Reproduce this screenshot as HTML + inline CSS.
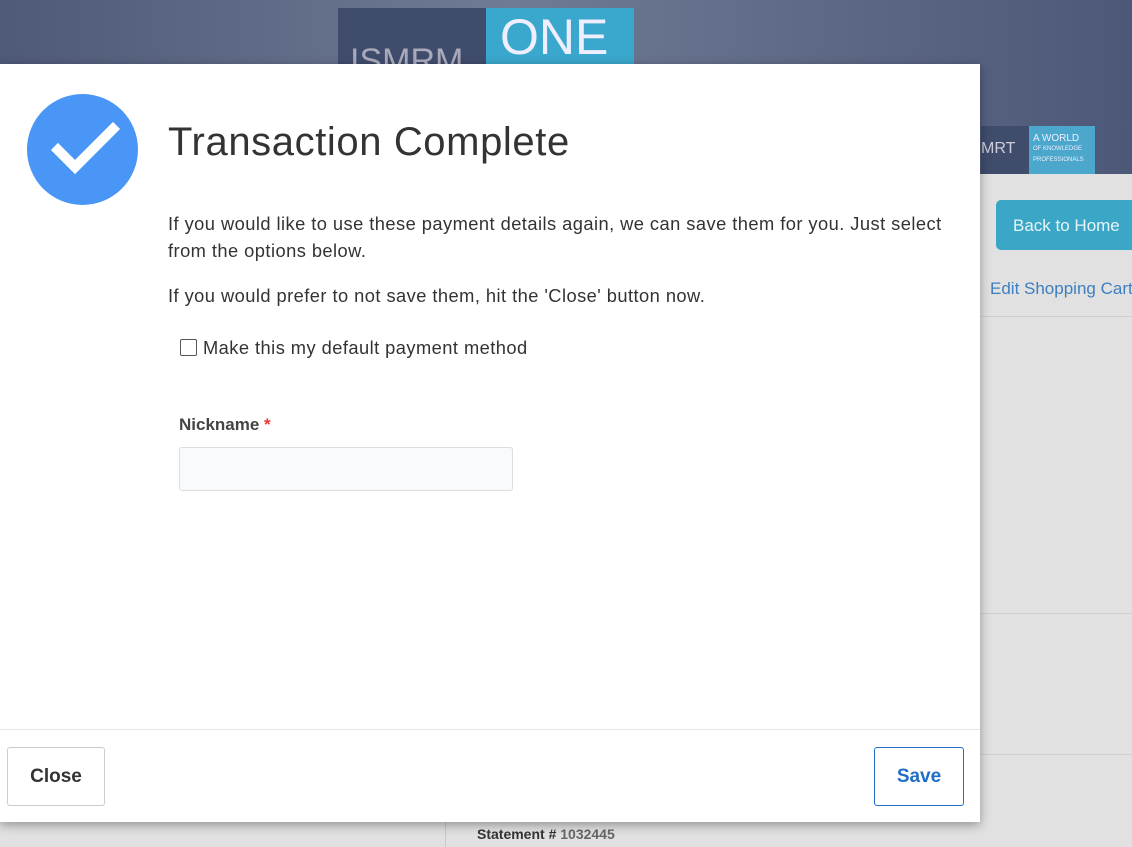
<!DOCTYPE html>
<html><head><style>
*{box-sizing:border-box;margin:0;padding:0}
body{width:1132px;height:847px;overflow:hidden;position:relative;font-family:"Liberation Sans",sans-serif;background:#e1e1e1}
.hdr{position:absolute;left:0;top:0;width:1132px;height:174px;background:linear-gradient(90deg,#4f5a78,#6f7a94 45%,#4d5878)}
.logo1{position:absolute;left:338px;top:8px;width:148px;height:56px;background:#3f4c6c;color:#aab;font-size:34px;padding:34px 0 0 12px;overflow:hidden}
.logo2{position:absolute;left:486px;top:8px;width:148px;height:56px;background:#3aa7cc;color:#eef;font-size:50px;padding:4px 0 0 14px;line-height:50px;overflow:hidden}
.smrt{position:absolute;left:981px;top:126px;width:48px;height:48px;background:#3f4c6c;color:#ccd;font-size:16px;padding-top:14px}
.world{position:absolute;left:1029px;top:126px;width:66px;height:48px;background:#4ba8cc;color:#eef;font-size:10px;padding:8px 4px;line-height:9px}
.btn{position:absolute;left:996px;top:200px;width:150px;height:50px;background:#3aa7c7;border-radius:5px;color:#e8f4f8;font-size:17px;padding:16px 0 0 17px}
.link{position:absolute;left:990px;top:279px;color:#3d7fc0;font-size:17px;white-space:nowrap}
.ln{position:absolute;left:981px;width:151px;height:1px;background:#cfcfcf}
.vl{position:absolute;left:445px;top:822px;width:1px;height:25px;background:#c8c8c8}
.stmt{position:absolute;left:477px;top:826px;font-size:14px;font-weight:bold;color:#333}
.stmt span{color:#666}
.modal{position:absolute;left:0;top:64px;width:980px;height:758px;background:#fff;box-shadow:0 3px 10px rgba(0,0,0,.35)}
.check{position:absolute;left:27px;top:30px;width:111px;height:111px;border-radius:50%;background:#4a96f7}
h1{position:absolute;left:168px;top:56px;font-size:40px;font-weight:normal;color:#333;letter-spacing:0.6px}
.p{position:absolute;left:168px;font-size:18.3px;color:#333;line-height:27px;width:790px;white-space:nowrap;letter-spacing:0.45px}
.cb{position:absolute;left:180px;top:275px;width:17px;height:17px;border:1.5px solid #555;border-radius:2px}
.lbl{position:absolute;left:179px;top:351px;font-size:17px;font-weight:bold;color:#444}
.lbl span{color:#e33}
.inp{position:absolute;left:179px;top:383px;width:334px;height:44px;border:1px solid #ddd;border-radius:3px;background:#f9fafc}
.foot{position:absolute;left:0;top:665px;width:980px;height:1px;background:#e5e5e5}
.b{position:absolute;top:683px;height:59px;border-radius:3px;font-size:19px;font-weight:bold;text-align:center;line-height:57px}
</style></head><body>
<div class="hdr"></div>
<div class="logo1">ISMRM</div><div class="logo2">ONE</div>
<div class="smrt">MRT</div><div class="world">A WORLD<br><span style="font-size:6px">OF KNOWLEDGE<br>PROFESSIONALS</span></div>
<div class="btn">Back to Home</div>
<div class="link">Edit Shopping Cart</div>
<div class="ln" style="top:316px"></div><div class="ln" style="top:613px"></div><div class="ln" style="top:754px"></div>
<div class="vl"></div>
<div class="stmt">Statement # <span>1032445</span></div>
<div class="modal">
<div class="check"><svg width="111" height="111" viewBox="0 0 111 111"><path d="M31 56 L48 73 L86 35" stroke="#fff" stroke-width="10" fill="none" stroke-linecap="square"/></svg></div>
<h1>Transaction Complete</h1>
<div class="p" style="top:146px">If you would like to use these payment details again, we can save them for you. Just select<br>from the options below.</div>
<div class="p" style="top:218px">If you would prefer to not save them, hit the 'Close' button now.</div>
<div class="cb"></div>
<div class="p" style="left:203px;top:270px">Make this my default payment method</div>
<div class="lbl">Nickname <span>*</span></div>
<div class="inp"></div>
<div class="foot"></div>
<div class="b" style="left:7px;width:98px;border:1px solid #ccc;color:#333">Close</div>
<div class="b" style="left:874px;width:90px;border:1px solid #1f6fc8;color:#1f6fc8">Save</div>
</div>
</body></html>
